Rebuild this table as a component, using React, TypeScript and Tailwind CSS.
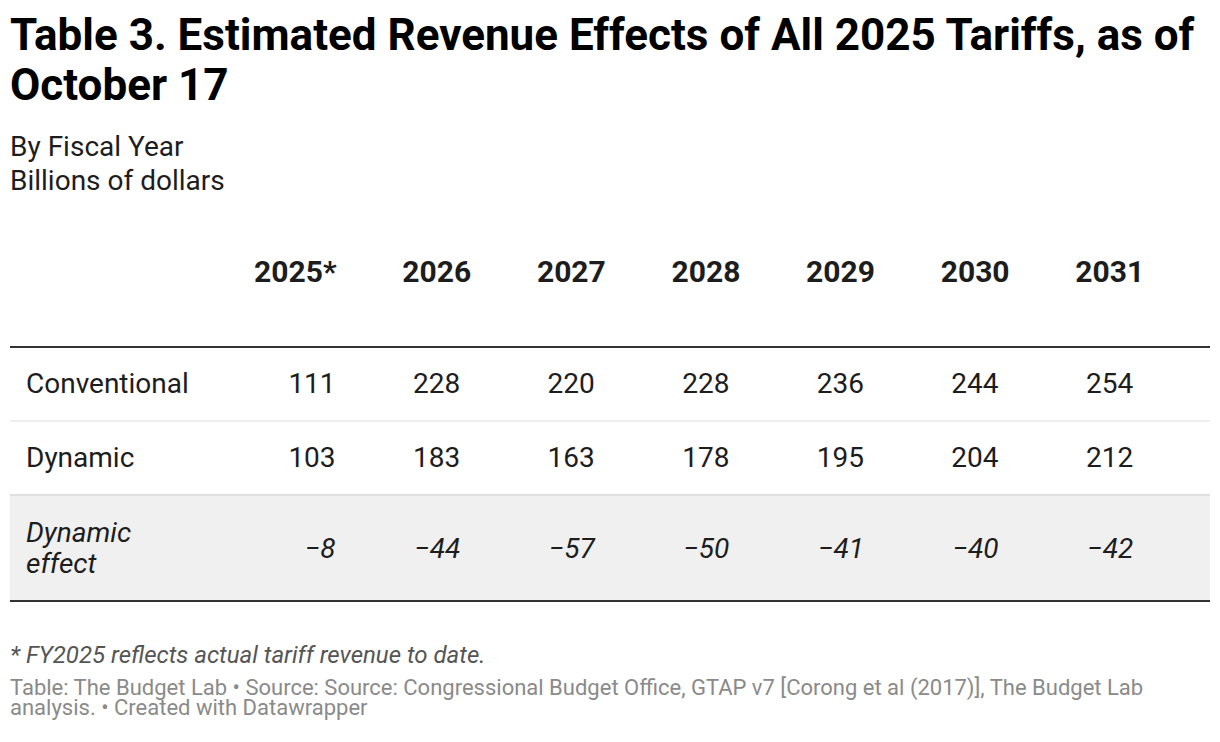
import React from "react";

const years = ["2025*", "2026", "2027", "2028", "2029", "2030", "2031"];
const rows = [
  { label: "Conventional", vals: ["111", "228", "220", "228", "236", "244", "254"] },
  { label: "Dynamic", vals: ["103", "183", "163", "178", "195", "204", "212"] },
];
const effect = ["−8", "−44", "−57", "−50", "−41", "−40", "−42"];

const grid = "grid grid-cols-[192px_repeat(7,134.6px)_1fr]";

export default function App() {
  return (
    <div className="w-[1220px] h-[742px] bg-white font-[Roboto,sans-serif] px-[10px] pt-[10px] overflow-hidden">
      <h1 className="text-[44px] leading-[50px] font-bold text-black">
        Table 3. Estimated Revenue Effects of All 2025 Tariffs, as of October 17
      </h1>
      <div className="mt-[20px] text-[28px] leading-[34px] text-[#1d1d1d]">
        <div>By Fiscal Year</div>
        <div>Billions of dollars</div>
      </div>

      <div className={`${grid} h-[150px] items-center border-b-2 border-[#333333] text-[30px] leading-[36px] font-bold text-[#1d1d1d]`}>
        <div />
        {years.map((y) => (
          <div key={y} className="text-right">
            {y}
          </div>
        ))}
        <div />
      </div>

      {rows.map((r, i) => (
        <div
          key={r.label}
          className={`${grid} h-[74px] items-center border-b-2 ${i === 0 ? "border-[#eeeeee]" : "border-[#e0e0e0]"} text-[28px] leading-[34px] text-[#1d1d1d]`}
        >
          <div className="pl-[16px]">{r.label}</div>
          {r.vals.map((v, j) => (
            <div key={j} className={`text-right ${j === 0 ? "pr-[1px]" : "pr-[11px]"}`}>
              {v}
            </div>
          ))}
          <div />
        </div>
      ))}

      <div className={`${grid} h-[106px] items-center bg-[#f0f0f0] border-b-2 border-[#333333] text-[28px] leading-[31px] italic text-[#1d1d1d]`}>
        <div className="pl-[16px]">
          <div>Dynamic</div>
          <div>effect</div>
        </div>
        {effect.map((v, j) => (
          <div key={j} className={`text-right ${j === 0 ? "pr-[1px]" : "pr-[11px]"}`}>
            {v}
          </div>
        ))}
        <div />
      </div>

      <div className="mt-[39px] text-[24px] leading-[28px] italic text-[#555555]">
        * FY2025 reflects actual tariff revenue to date.
      </div>
      <div className="mt-[9px] text-[22px] leading-[20px] text-[#8a8a8a]">
        Table: The Budget Lab • Source: Source: Congressional Budget Office, GTAP v7 [Corong et al (2017)], The Budget Lab analysis. • Created with Datawrapper
      </div>
    </div>
  );
}
